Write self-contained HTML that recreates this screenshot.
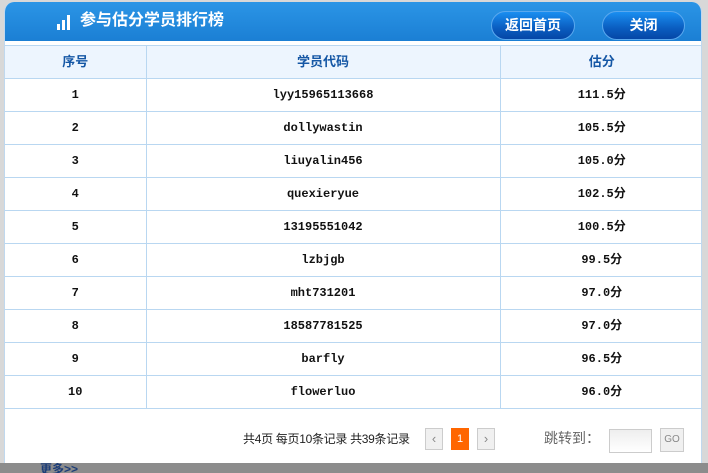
<!DOCTYPE html>
<html><head><meta charset="utf-8"><style>
*{margin:0;padding:0;box-sizing:border-box}
html,body{width:708px;height:473px;overflow:hidden}
body{background:#d8d8d8;font-family:"Liberation Sans","Noto Sans CJK SC",sans-serif;position:relative}
.bottom{position:absolute;left:0;top:463px;width:708px;height:10px;background:#8c8c8c}
.more{position:absolute;left:40px;top:463px;font-size:12px;line-height:12px;color:#1c3d78;font-weight:bold}
.dlg{position:absolute;left:4px;top:2px;width:698px;height:461px;background:#fff;border-radius:10px 10px 0 0;overflow:hidden;border-left:1px solid #c0d8ee;border-right:1px solid #c0d8ee}
.hd{height:39px;background:linear-gradient(#2b95e6,#1b7fd4);position:relative;color:#fff}
.title{position:absolute;left:75px;top:9px;font-size:16px;line-height:20px;font-weight:bold}
.ico{position:absolute;left:52px;top:13px;width:14px;height:15px}
.ico i{position:absolute;bottom:0;width:3px;background:#fff}
.btn{position:absolute;top:9px;height:29px;border-radius:15px;background:linear-gradient(#1a8ef0,#0a5dc0 60%,#0546a6);border:1px solid #5aa8ee;color:#fff;font-size:14px;font-weight:bold;text-align:center;line-height:27px}
table{position:absolute;left:0;top:43px;width:698px;border-collapse:collapse;font-size:12px}
td,th{border:1px solid #b9d7f1;height:33px;text-align:center;vertical-align:middle;line-height:16px;padding:0}
th{background:#edf5fe;color:#1557a5;font-size:13px;font-weight:bold}
td{font-family:"Liberation Mono","Noto Sans CJK SC",monospace;font-weight:bold;font-size:12px;color:#111}
td span{display:inline-block;height:16px;line-height:16px;vertical-align:middle}
tr td:first-child,tr th:first-child{border-left:none}
tr td:last-child,tr th:last-child{border-right:none}
.ft{position:absolute;top:429px;font-size:12px;line-height:16px;color:#222;white-space:nowrap}
.pb{position:absolute;top:426px;width:18px;height:22px;border:1px solid #ccc;background:#f0f0f0;color:#888;text-align:center;line-height:20px;font-size:13px}
</style></head><body>
<div class="bottom"></div><div class="more">更多>></div>
<div class="dlg">
<div class="hd">
<div class="ico"><i style="left:0;height:6px"></i><i style="left:5px;height:10px"></i><i style="left:10px;height:15px"></i></div>
<div class="title">参与估分学员排行榜</div>
<div class="btn" style="left:486px;width:84px">返回首页</div>
<div class="btn" style="left:597px;width:83px">关闭</div>
</div>
<table>
<tr><th style="width:141px">序号</th><th style="width:354px">学员代码</th><th>估分</th></tr>
<tr><td>1</td><td>lyy15965113668</td><td><span>111.5分</span></td></tr>
<tr><td>2</td><td>dollywastin</td><td><span>105.5分</span></td></tr>
<tr><td>3</td><td>liuyalin456</td><td><span>105.0分</span></td></tr>
<tr><td>4</td><td>quexieryue</td><td><span>102.5分</span></td></tr>
<tr><td>5</td><td>13195551042</td><td><span>100.5分</span></td></tr>
<tr><td>6</td><td>lzbjgb</td><td><span>99.5分</span></td></tr>
<tr><td>7</td><td>mht731201</td><td><span>97.0分</span></td></tr>
<tr><td>8</td><td>18587781525</td><td><span>97.0分</span></td></tr>
<tr><td>9</td><td>barfly</td><td><span>96.5分</span></td></tr>
<tr><td>10</td><td>flowerluo</td><td><span>96.0分</span></td></tr>
</table>
<div class="ft" style="left:238px;letter-spacing:-0.3px">共4页 每页10条记录 共39条记录</div>
<div class="pb" style="left:420px">‹</div>
<div class="pb" style="left:446px;background:#ff6600;border-color:#ff6600;color:#fff;font-size:11px">1</div>
<div class="pb" style="left:472px">›</div>
<div class="ft" style="left:539px;top:428px;color:#666;font-size:14px">跳转到：</div>
<div style="position:absolute;left:604px;top:427px;width:43px;height:24px;border:1px solid #ccc;background:linear-gradient(#eee,#fff)"></div>
<div class="pb" style="left:655px;width:24px;height:24px;font-size:10px;line-height:22px">GO</div>
</div>
</body></html>
